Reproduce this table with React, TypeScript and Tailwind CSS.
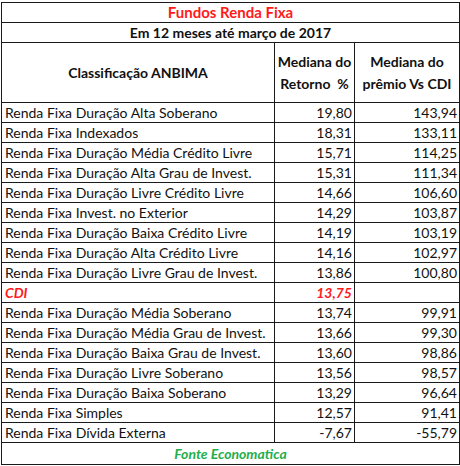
import React from 'react';

type Row = { name: string; ret: string; premio: string; highlight?: boolean };

const rows: Row[] = [
  { name: 'Renda Fixa Duração Alta Soberano', ret: '19,80', premio: '143,94' },
  { name: 'Renda Fixa Indexados', ret: '18,31', premio: '133,11' },
  { name: 'Renda Fixa Duração Média Crédito Livre', ret: '15,71', premio: '114,25' },
  { name: 'Renda Fixa Duração Alta Grau de Invest.', ret: '15,31', premio: '111,34' },
  { name: 'Renda Fixa Duração Livre Crédito Livre', ret: '14,66', premio: '106,60' },
  { name: 'Renda Fixa Invest. no Exterior', ret: '14,29', premio: '103,87' },
  { name: 'Renda Fixa Duração Baixa Crédito Livre', ret: '14,19', premio: '103,19' },
  { name: 'Renda Fixa Duração Alta Crédito Livre', ret: '14,16', premio: '102,97' },
  { name: 'Renda Fixa Duração Livre Grau de Invest.', ret: '13,86', premio: '100,80' },
  { name: 'CDI', ret: '13,75', premio: '', highlight: true },
  { name: 'Renda Fixa Duração Média Soberano', ret: '13,74', premio: '99,91' },
  { name: 'Renda Fixa Duração Média Grau de Invest.', ret: '13,66', premio: '99,30' },
  { name: 'Renda Fixa Duração Baixa Grau de Invest.', ret: '13,60', premio: '98,86' },
  { name: 'Renda Fixa Duração Livre Soberano', ret: '13,56', premio: '98,57' },
  { name: 'Renda Fixa Duração Baixa Soberano', ret: '13,29', premio: '96,64' },
  { name: 'Renda Fixa Simples', ret: '12,57', premio: '91,41' },
  { name: 'Renda Fixa Dívida Externa', ret: '-7,67', premio: '-55,79' },
];

const cell = 'border border-[#1a1a1a] h-[20px] p-0 leading-[19px]';

export default function App() {
  return (
    <div className="w-[460px] h-[466px] bg-white pt-[2px] pl-[1px]" style={{ fontFamily: 'Lato, "Open Sans", sans-serif' }}>
      <table className="table-fixed border-collapse w-[458px] text-[14px] text-[#111]">
        <colgroup>
          <col className="w-[273px]" />
          <col className="w-[80px]" />
          <col className="w-[105px]" />
        </colgroup>
        <tbody>
          {/* Title */}
          <tr>
            <td colSpan={3} className={`${cell} text-center font-bold text-[15px] text-[#ff1a1a]`}>
              Fundos Renda Fixa
            </td>
          </tr>
          <tr>
            <td colSpan={3} className={`${cell} text-center font-bold`}>
              Em 12 meses até março de 2017
            </td>
          </tr>
          {/* Column headers */}
          <tr>
            <td className="border border-[#1a1a1a] h-[60px] p-0 text-center font-bold">Classificação ANBIMA</td>
            <td className="border border-[#1a1a1a] h-[60px] p-0 text-center font-bold leading-[22px]">
              Mediana do
              <br />
              Retorno&nbsp; %
            </td>
            <td className="border border-[#1a1a1a] h-[60px] p-0 text-center font-bold leading-[22px]">
              Mediana do
              <br />
              prêmio Vs CDI
            </td>
          </tr>
          {rows.map((r) =>
            r.highlight ? (
              <tr key={r.name}>
                <td className={`${cell} pl-[3px] font-bold italic text-[#ff1a1a]`}>{r.name}</td>
                <td className={`${cell} pr-[2px] text-right font-bold italic text-[#ff1a1a]`}>{r.ret}</td>
                <td className={cell}></td>
              </tr>
            ) : (
              <tr key={r.name}>
                <td className={`${cell} pl-[3px] whitespace-nowrap`}>{r.name}</td>
                <td className={`${cell} pr-[2px] text-right`}>{r.ret}</td>
                <td className={`${cell} pr-[2px] text-right`}>{r.premio}</td>
              </tr>
            )
          )}
          {/* Footer */}
          <tr>
            <td colSpan={3} className="border border-[#1a1a1a] h-[21px] p-0 text-center font-bold italic text-[#1fae4b]">
              Fonte Economatica
            </td>
          </tr>
        </tbody>
      </table>
    </div>
  );
}
